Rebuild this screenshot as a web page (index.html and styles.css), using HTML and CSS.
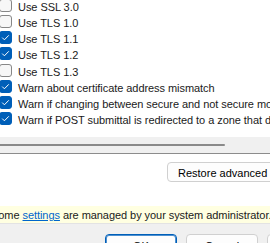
FILE: index.html
```html
<!DOCTYPE html>
<html>
<head>
<meta charset="utf-8">
<link rel="stylesheet" href="styles.css">
</head>
<body>
<div class="dlg">
  <div class="page">
    <div class="list">
      <ul class="opts">
        <li class="opt"><span class="cb"></span><span class="lbl">Use SSL 3.0</span></li>
        <li class="opt"><span class="cb"></span><span class="lbl">Use TLS 1.0</span></li>
        <li class="opt"><span class="cb on"><svg viewBox="0 0 13 13" width="13" height="13"><path d="M3.2 6.6 L5.4 8.8 L9.8 4.3" fill="none" stroke="#fff" stroke-width="1"/></svg></span><span class="lbl">Use TLS 1.1</span></li>
        <li class="opt"><span class="cb on"><svg viewBox="0 0 13 13" width="13" height="13"><path d="M3.2 6.6 L5.4 8.8 L9.8 4.3" fill="none" stroke="#fff" stroke-width="1"/></svg></span><span class="lbl">Use TLS 1.2</span></li>
        <li class="opt"><span class="cb"></span><span class="lbl">Use TLS 1.3</span></li>
        <li class="opt"><span class="cb on"><svg viewBox="0 0 13 13" width="13" height="13"><path d="M3.2 6.6 L5.4 8.8 L9.8 4.3" fill="none" stroke="#fff" stroke-width="1"/></svg></span><span class="lbl">Warn about certificate address mismatch</span></li>
        <li class="opt"><span class="cb on"><svg viewBox="0 0 13 13" width="13" height="13"><path d="M3.2 6.6 L5.4 8.8 L9.8 4.3" fill="none" stroke="#fff" stroke-width="1"/></svg></span><span class="lbl">Warn if changing between secure and not secure mode</span></li>
        <li class="opt"><span class="cb on"><svg viewBox="0 0 13 13" width="13" height="13"><path d="M3.2 6.6 L5.4 8.8 L9.8 4.3" fill="none" stroke="#fff" stroke-width="1"/></svg></span><span class="lbl">Warn if POST submittal is redirected to a zone that does not permit posts</span></li>
      </ul>
      <div class="hscroll"><div class="thumb"></div></div>
    </div>
    <div class="restore-row"><button class="btn restore">Restore advanced settings</button></div>
  </div>
  <div class="infobar">Some <a class="link" href="#">settings</a> are managed by your system administrator.</div>
  <div class="footer">
    <button class="btn ok">OK</button>
    <button class="btn">Cancel</button>
    <button class="btn">Apply</button>
  </div>
</div>
</body>
</html>
```
FILE: styles.css
```css
html, body {
  margin: 0;
  padding: 0;
  width: 270px;
  height: 243px;
  overflow: hidden;
  background: #f0f0f0;
}
.dlg {
  margin-left: -10px;
  margin-top: -3px;
  width: 520px;
  font-family: "Liberation Sans", Arial, sans-serif;
  font-size: 11px;
  letter-spacing: -0.06px;
  color: #000;
}
.page {
  background: #ffffff;
}
.list {
  background: #fff;
  border-bottom: 1px solid #8c8c8c;
}
.opts {
  list-style: none;
  margin: 0;
  padding: 0 0 10px 9px;
}
.opt {
  display: flex;
  align-items: center;
  height: 16.25px;
  white-space: nowrap;
}
.cb {
  box-sizing: border-box;
  width: 13px;
  height: 13px;
  border: 1px solid #878787;
  border-radius: 3px;
  background: #f7f7f7;
  flex: none;
  margin-right: 6px;
  display: flex;
}
.cb.on {
  background: #005fb8;
  border-color: #005fb8;
}
.cb svg {
  margin: -1px;
}
.lbl {
  line-height: 16px;
  padding-top: 3px;
  color: #1a1a1a;
}
.hscroll {
  height: 16px;
  background: #f0f0f0;
  padding-top: 7px;
  box-sizing: border-box;
}
.thumb {
  height: 2px;
  width: 235px;
  background: #8a8a8a;
  border-radius: 1px;
}
.restore-row {
  padding: 8px 0 24px 177px;
}
.btn {
  font: inherit;
  color: #000;
  background: #fdfdfd;
  border: 1px solid #d0d0d0;
  border-radius: 4px;
  height: 20px;
  padding: 0 9px;
  box-sizing: border-box;
  white-space: nowrap;
}
.restore {
  padding-left: 10px;
  padding-top: 1px;
}
.infobar {
  background: #ffffe1;
  height: 17px;
  line-height: 18px;
  padding-left: 1px;
  white-space: nowrap;
  border-bottom: 1px solid #e3e3e3;
  color: #1a1a1a;
}
.link {
  color: #0066cc;
  text-decoration: underline;
}
.footer {
  display: flex;
  gap: 9px;
  padding: 10px 0 0 115px;
}
.footer .btn {
  width: 72px;
  height: 23px;
}
.btn.ok {
  border-color: #005fb8;
  box-shadow: inset 0 0 0 1px #4c8fd0;
}
```
